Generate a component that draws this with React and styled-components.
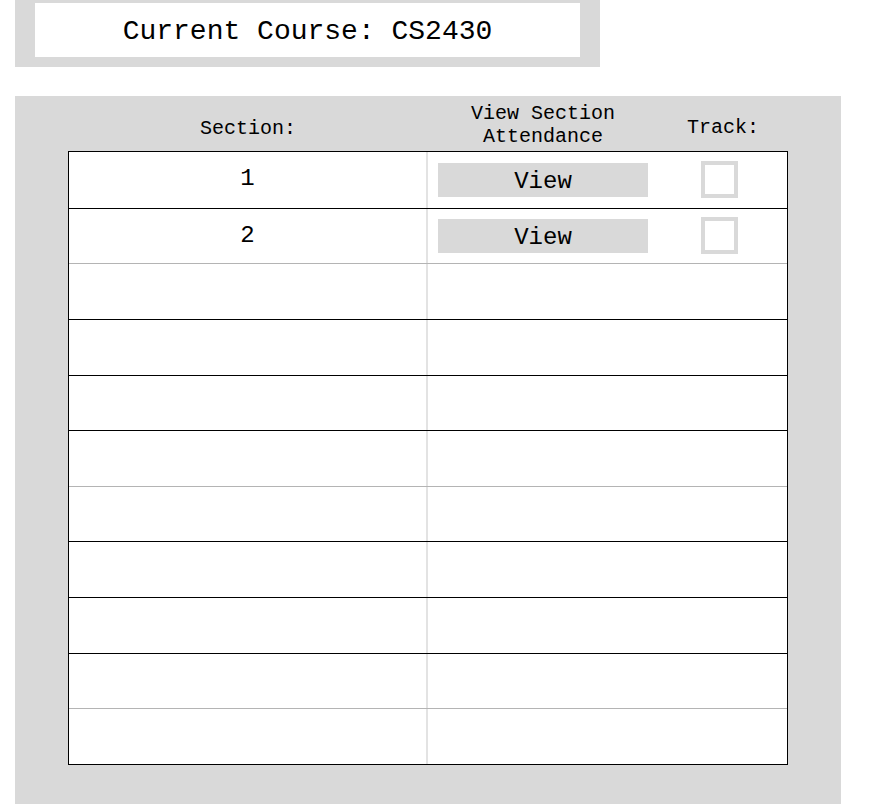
import React from "react";
import styled, { createGlobalStyle } from "styled-components";

const GlobalStyle = createGlobalStyle`
  body {
    margin: 0;
    background: #ffffff;
    font-family: "Liberation Mono", "Courier New", monospace;
    color: #000;
  }
`;

const Page = styled.div`
  display: flex;
  flex-direction: column;
  align-items: flex-start;
  gap: 29px;
  padding-left: 15px;
`;

const CourseBox = styled.div`
  background-color: #d9d9d9;
  padding: 3px 20px 10px;
`;

const CourseTitle = styled.div`
  width: 545px;
  height: 54px;
  padding-top: 2px;
  box-sizing: border-box;
  background: #fff;
  display: flex;
  align-items: center;
  justify-content: center;
  font-size: 28px;
`;

const Panel = styled.div`
  width: 826px;
  box-sizing: border-box;
  background-color: #d9d9d9;
  padding: 0 53px 50px;
`;

const Header = styled.div`
  display: grid;
  grid-template-columns: 360px 230px 1fr;
  height: 55px;
  align-items: center;
  justify-items: center;
  font-size: 20px;
  text-align: center;
  line-height: 23px;
`;

const HeaderCell = styled.div`
  padding-top: ${(p) => p.$offset || 0}px;
`;

const Table = styled.div`
  height: 614px;
  box-sizing: border-box;
  border: 1px solid #000;
  background: #fff;
  display: grid;
  grid-template-rows: repeat(11, 1fr);
`;

const Row = styled.div`
  display: grid;
  grid-template-columns: 357px 2px 230px 1fr;
  border-top: ${(p) => (p.$first ? "none" : `1px solid ${p.$soft ? "#b4b4b4" : "#000"}`)};
  align-items: center;
  justify-items: center;
`;

const Number = styled.div`
  align-self: start;
  padding-top: 13px;
  font-size: 24px;
`;

const Divider = styled.div`
  align-self: stretch;
  width: 2px;
  background: #e3e3e3;
`;

const ViewButton = styled.button`
  width: 210px;
  height: 34px;
  border: none;
  background: #d9d9d9;
  font-family: "Liberation Mono", "Courier New", monospace;
  font-size: 24px;
  color: #000;
  padding: 3px 0 0;
  cursor: pointer;
`;

const TrackBox = styled.input`
  appearance: none;
  width: 37px;
  height: 37px;
  margin: 0 6px 0 0;
  box-sizing: border-box;
  border: 4px solid #d9d9d9;
  background: #fff;
  cursor: pointer;
`;

const sections = [1, 2];
const totalRows = 11;

export default function App() {
  const rows = Array.from({ length: totalRows }, (_, i) => sections[i]);
  return (
    <>
      <GlobalStyle />
      <Page>
        <CourseBox>
          <CourseTitle>Current Course: CS2430</CourseTitle>
        </CourseBox>
        <Panel>
          <Header>
            <HeaderCell $offset={9}>Section:</HeaderCell>
            <HeaderCell $offset={3}>
              View Section
              <br />
              Attendance
            </HeaderCell>
            <HeaderCell $offset={7}>Track:</HeaderCell>
          </Header>
          <Table>
            {rows.map((sec, i) => (
              <Row key={i} $first={i === 0} $soft={i % 4 === 2}>
                <Number>{sec || ""}</Number>
                <Divider />
                {sec ? <ViewButton>View</ViewButton> : <span />}
                {sec ? <TrackBox type="checkbox" /> : <span />}
              </Row>
            ))}
          </Table>
        </Panel>
      </Page>
    </>
  );
}
